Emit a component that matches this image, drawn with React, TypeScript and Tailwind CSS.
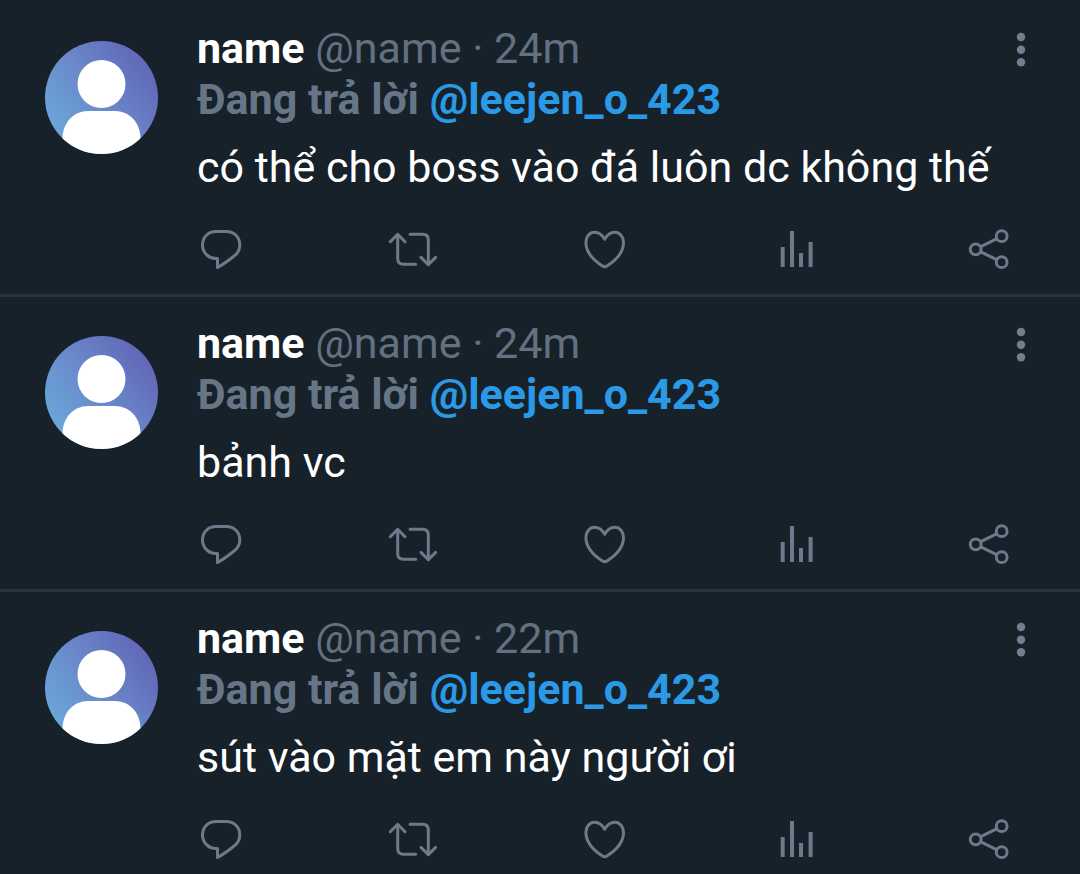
import { useId } from "react";
import type { ReactNode } from "react";

type Tweet = { id: number; time: string; text: string };

const tweets: Tweet[] = [
  { id: 1, time: "24m", text: "có thể cho boss vào đá luôn dc không thế" },
  { id: 2, time: "24m", text: "bảnh vc" },
  { id: 3, time: "22m", text: "sút vào mặt em này người ơi" },
];

function Avatar() {
  const id = useId();
  return (
    <svg viewBox="0 0 113 113" className="size-[113px] shrink-0" role="img" aria-label="name">
      <defs>
        <linearGradient id={`${id}-g`} x1="0.05" y1="0.75" x2="0.85" y2="0.15">
          <stop offset="0" stopColor="#6aa6da" />
          <stop offset="0.5" stopColor="#6a88ca" />
          <stop offset="1" stopColor="#6268b8" />
        </linearGradient>
        <clipPath id={`${id}-c`}>
          <circle cx="56.5" cy="56.5" r="56.5" />
        </clipPath>
      </defs>
      <g clipPath={`url(#${id}-c)`}>
        <rect width="113" height="113" fill={`url(#${id}-g)`} />
        <circle cx="56.5" cy="43" r="24" fill="#fff" />
        <path d="M17.5 113V98C17.5 81 29 70 43 70H70C84 70 95.5 81 95.5 98V113Z" fill="#fff" />
      </g>
    </svg>
  );
}

function Action({ label, children }: { label: string; children: ReactNode }) {
  return (
    <button type="button" aria-label={label} className="size-12">
      <svg
        viewBox="0 0 48 48"
        className="size-12 overflow-visible"
        fill="none"
        stroke="currentColor"
        strokeWidth="3"
        strokeLinecap="round"
        strokeLinejoin="round"
        aria-hidden="true"
      >
        {children}
      </svg>
    </button>
  );
}

function TweetRow({ tweet }: { tweet: Tweet }) {
  return (
    <article className="flex gap-[39px] border-b-3 border-[#27323d] pr-[67px] pb-[21px] pl-[45px]">
      <div className="pt-[39px]">
        <Avatar />
      </div>
      <div className="min-w-0 flex-1 pt-[21px]">
        <div className="flex items-start justify-between">
          <p className="text-[43px] leading-[51px] text-[#627180]">
            <span className="font-bold text-white">name</span> @name · {tweet.time}
          </p>
          <button type="button" aria-label="More" className="-mr-6 pt-2">
            <svg viewBox="0 0 32 40" className="h-10 w-8" fill="#71808e" aria-hidden="true">
              <circle cx="16" cy="6" r="4.2" />
              <circle cx="16" cy="18.7" r="4.2" />
              <circle cx="16" cy="31.3" r="4.2" />
            </svg>
          </button>
        </div>
        <p className="text-[43px] leading-[51px] font-bold text-[#667686]">
          Đang trả lời{" "}
          <a href="#leejen_o_423" className="text-[#2b9ae6]">
            @leejen_o_423
          </a>
        </p>
        <p className="mt-[17px] text-[43px] leading-[51px] whitespace-nowrap text-white">{tweet.text}</p>
        <div className="mt-8 flex justify-between text-[#6b7b8b]">
          <Action label="Reply">
            <path d="M20.5 33.5H19C11 33.5 5.5 27 5.5 20C5.5 12 11.5 6.5 19 6.5H29C37 6.5 42.8 12 42.8 20C42.8 25 40 29 36.5 31.5C31.5 35.5 26 39.5 20.5 42.5Z" />
          </Action>
          <Action label="Retweet">
            <path d="M1.3 16.7L8.7 9.3L16 16.7M8.7 9.5V33.5Q8.7 39.3 14.5 39.3H26.7M21 9.3H33.5Q39.3 9.3 39.3 15V39.8M32 32.4L39.3 39.7L46.6 32.4" />
          </Action>
          <Action label="Like">
            <path d="M23.7 14.3C21 9.5 17.5 7.3 13.7 7.3C8.5 7.3 4.9 11.8 4.9 17.5C4.9 28 14.5 36.5 21.5 41Q23.7 42.6 25.9 41C33 36.5 42.5 28 42.5 17.5C42.5 11.8 38.8 7.3 33.7 7.3C29.9 7.3 26.4 9.5 23.7 14.3Z" />
          </Action>
          <Action label="View analytics">
            <path strokeWidth="4" strokeLinecap="butt" d="M9.7 22V42M19 6V42M28 28V42M37.6 17V42" />
          </Action>
          <Action label="Share">
            <circle cx="10.7" cy="24.3" r="5.4" />
            <circle cx="36.7" cy="11.2" r="5.4" />
            <circle cx="36.7" cy="37.2" r="5.4" />
            <path d="M15.8 21.7L31.6 13.8M15.8 26.9L31.6 34.6" />
          </Action>
        </div>
      </div>
    </article>
  );
}

export default function App() {
  return (
    <main className="h-screen overflow-hidden bg-[#17212a] pt-0.5 font-['Roboto',sans-serif]">
      {tweets.map((tweet) => (
        <TweetRow key={tweet.id} tweet={tweet} />
      ))}
    </main>
  );
}
